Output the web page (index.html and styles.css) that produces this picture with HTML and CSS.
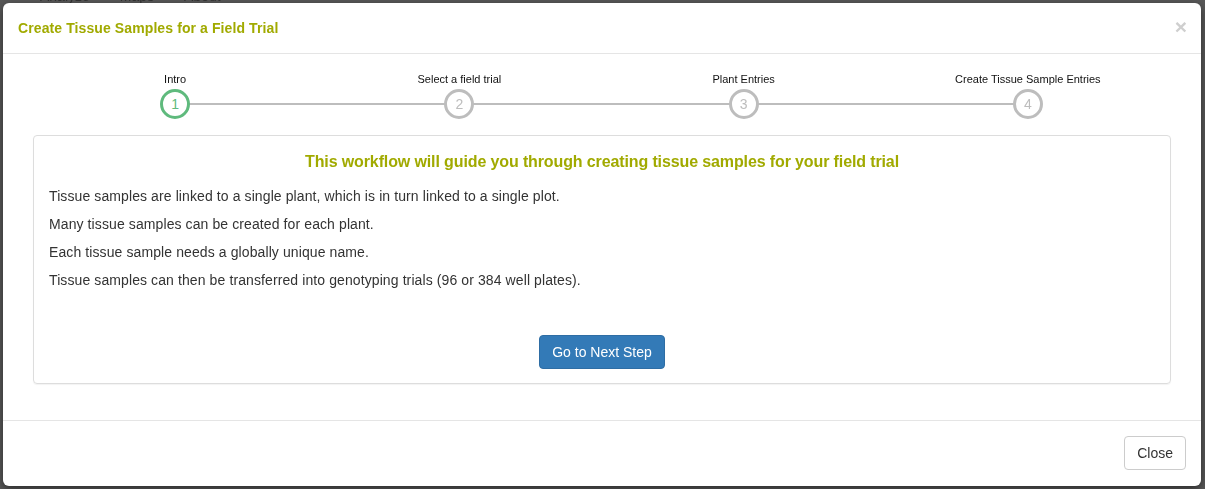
FILE: index.html
```html
<!DOCTYPE html>
<html>
<head>
<meta charset="utf-8">
<link rel="stylesheet" href="styles.css">
</head>
<body>
<div class="page-nav">
  <span>Analyze</span><span>Maps</span><span>About</span>
</div>
<div class="modal">
  <div class="modal-header">
    <h4 class="modal-title">Create Tissue Samples for a Field Trial</h4>
    <span class="close">&times;</span>
  </div>
  <div class="modal-body">
    <div class="steps">
      <div class="step active">
        <div class="step-label">Intro</div>
        <div class="step-circle">1</div>
      </div>
      <div class="step">
        <div class="step-label">Select a field trial</div>
        <div class="step-circle">2</div>
      </div>
      <div class="step">
        <div class="step-label">Plant Entries</div>
        <div class="step-circle">3</div>
      </div>
      <div class="step">
        <div class="step-label">Create Tissue Sample Entries</div>
        <div class="step-circle">4</div>
      </div>
    </div>
    <div class="panel">
      <h3 class="panel-title">This workflow will guide you through creating tissue samples for your field trial</h3>
      <p>Tissue samples are linked to a single plant, which is in turn linked to a single plot.</p>
      <p>Many tissue samples can be created for each plant.</p>
      <p>Each tissue sample needs a globally unique name.</p>
      <p>Tissue samples can then be transferred into genotyping trials (96 or 384 well plates).</p>
      <div class="panel-actions">
        <button class="btn btn-primary">Go to Next Step</button>
      </div>
    </div>
  </div>
  <div class="modal-footer">
    <button class="btn btn-default">Close</button>
  </div>
</div>
</body>
</html>
```
FILE: styles.css
```css
* { box-sizing: border-box; }
html, body { margin: 0; padding: 0; }
body {
  background: #585858;
  font-family: "Liberation Sans", Arial, sans-serif;
  font-size: 14px;
  color: #333;
  height: 489px;
  overflow: hidden;
  padding: 3px 4px 0 3px;
}
.page-nav {
  position: fixed;
  top: -12px;
  left: 40px;
  display: flex;
  gap: 30px;
  font-size: 14px;
  color: #333;
}
.modal {
  position: relative;
  background: #fff;
  border-radius: 6px;
  height: 483px;
  box-shadow: 0 3px 9px rgba(0,0,0,.5);
  display: flex;
  flex-direction: column;
}
.modal-header {
  height: 51px;
  padding: 0 15px;
  border-bottom: 1px solid #e5e5e5;
  display: flex;
  align-items: center;
  justify-content: space-between;
}
.modal-title {
  margin: 0;
  font-size: 14px;
  font-weight: bold;
  color: #a1aa00;
  line-height: 20px;
  letter-spacing: 0.1px;
}
.close {
  font-size: 21px;
  font-weight: bold;
  color: #cfcfcf;
  line-height: 1;
  margin-top: -4px;
  margin-right: -1px;
}
.modal-body {
  flex: 1;
  padding: 19px 30px 0 30px;
}
.steps {
  display: flex;
  margin-right: 1px;
}
.step {
  flex: 1;
  display: flex;
  flex-direction: column;
  align-items: center;
  position: relative;
}
.step::before, .step::after {
  content: "";
  position: absolute;
  top: 30px;
  height: 2px;
  background: #bdbdbd;
}
.step::before { left: 0; right: 50%; }
.step::after { left: 50%; right: 0; }
.step:first-child::before { display: none; }
.step:last-child::after { display: none; }
.step-label {
  font-size: 11px;
  line-height: 13px;
  color: #111;
  margin-bottom: 3px;
}
.step-circle {
  position: relative;
  z-index: 1;
  width: 30px;
  height: 30px;
  border-radius: 50%;
  border: 3px solid #bdbdbd;
  background: #fff;
  color: #bdbdbd;
  font-size: 14px;
  line-height: 24px;
  text-align: center;
}
.step.active .step-circle {
  border-color: #5fba7d;
  color: #5fba7d;
}
.panel {
  margin-top: 16px;
  border: 1px solid #ddd;
  border-radius: 4px;
  box-shadow: 0 1px 1px rgba(0,0,0,.05);
  padding: 15px;
  height: 249px;
}
.panel-title {
  margin: 0 0 13px 0;
  text-align: center;
  font-size: 16px;
  line-height: 22px;
  font-weight: bold;
  color: #a1aa00;
  letter-spacing: -0.12px;
}
.panel p {
  margin: 0 0 8px 0;
  line-height: 20px;
  letter-spacing: 0.1px;
}
.panel-actions {
  display: flex;
  justify-content: center;
  margin-top: 45px;
}
.btn {
  font-family: "Liberation Sans", Arial, sans-serif;
  font-size: 14px;
  line-height: 20px;
  padding: 6px 12px;
  border-radius: 4px;
  border: 1px solid transparent;
  cursor: pointer;
}
.btn-primary {
  background: #337ab7;
  border-color: #2e6da4;
  color: #fff;
}
.btn-default {
  background: #fff;
  border-color: #ccc;
  color: #333;
}
.modal-footer {
  height: 66px;
  border-top: 1px solid #e5e5e5;
  padding: 15px;
  display: flex;
  justify-content: flex-end;
  align-items: flex-start;
}
```
